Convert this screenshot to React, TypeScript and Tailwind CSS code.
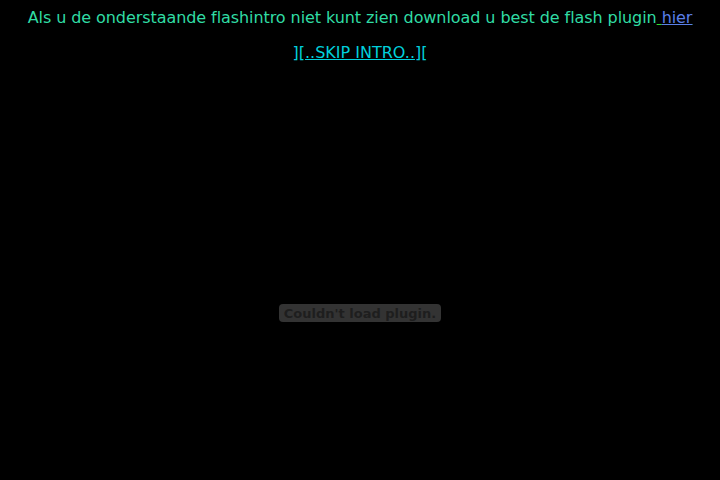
export default function App() {
  return (
    <div className="min-h-[480px] bg-black pt-2 text-center font-['DejaVu_Sans',sans-serif] text-[16px] leading-[19px]">
      <p className="tracking-[-0.075px] text-[#30dca4]">
        Als u de onderstaande flashintro niet kunt zien download u best de flash plugin
        <a href="#" className="underline decoration-[#30dc30]">
          {' '}
          <span className="text-[#5a7fe8] underline decoration-[#5a7fe8]">hier</span>
        </a>
      </p>
      <p className="mt-4 text-[#00d0dc]">
        ][
        <a href="#" className="underline">
          ..SKIP INTRO..
        </a>
        ][
      </p>
      <div className="mt-[242px] flex justify-center">
        <div className="flex h-[18px] w-[162px] items-center justify-center rounded-[4px] bg-[#333333] text-[13px] font-bold text-[#1e1e1e]">
          Couldn't load plugin.
        </div>
      </div>
    </div>
  )
}
